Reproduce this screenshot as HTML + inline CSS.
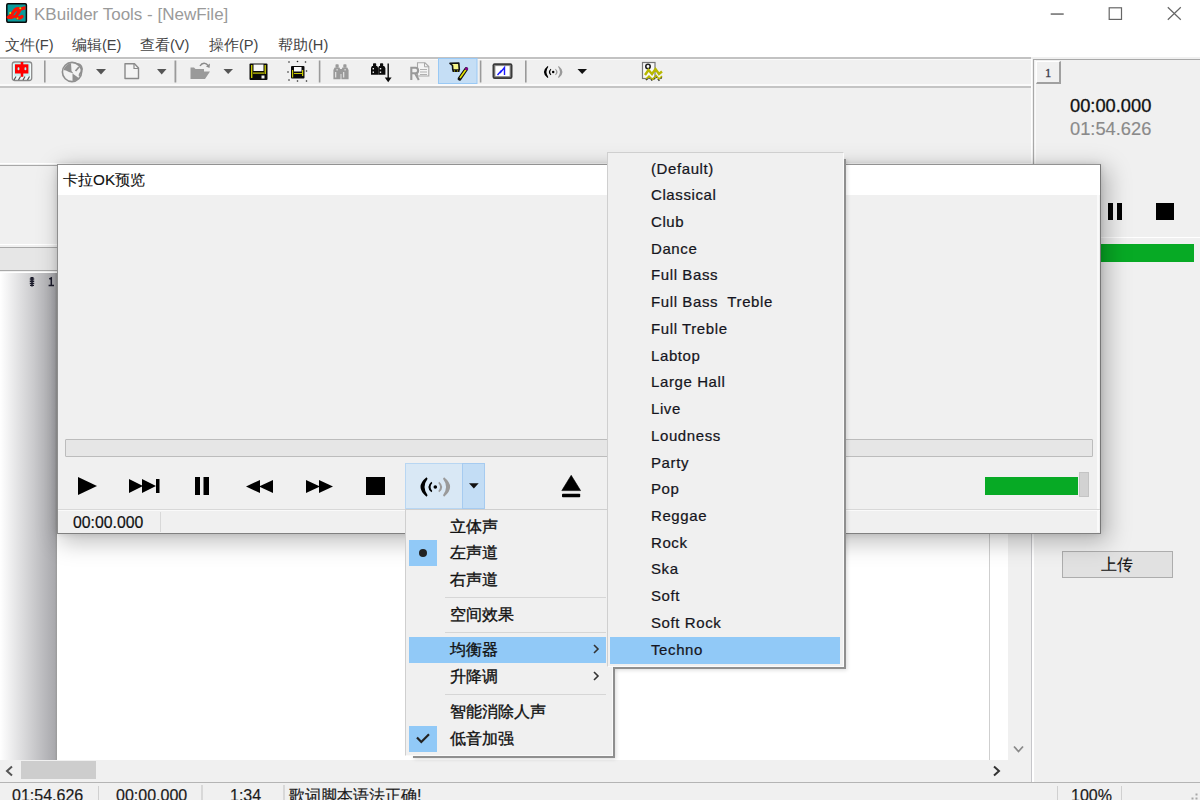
<!DOCTYPE html>
<html><head><meta charset="utf-8">
<style>
*{margin:0;padding:0;box-sizing:border-box}
html,body{width:1200px;height:800px;overflow:hidden;background:#f0f0f0;font-family:"Liberation Sans",sans-serif;color:#1a1a1a}
.a{position:absolute}
.t{position:absolute;white-space:nowrap;line-height:1}
</style></head><body>
<!-- title bar + menu -->
<div class="a" style="left:0;top:0;width:1200px;height:57px;background:#fff"></div>
<div class="a" style="left:7px;top:4px;width:20px;height:19px;background:#0e8a8a;border:2px solid #111;border-radius:2px"></div>
<div class="t" style="left:34px;top:6px;font-size:17px;color:#9a9a9a">KBuilder Tools - [NewFile]</div>
<div class="t" style="left:5px;top:37.5px;font-size:14.6px;color:#444">文件(F)</div>
<div class="t" style="left:72px;top:37.5px;font-size:14.6px;color:#444">编辑(E)</div>
<div class="t" style="left:140px;top:37.5px;font-size:14.6px;color:#444">查看(V)</div>
<div class="t" style="left:209px;top:37.5px;font-size:14.6px;color:#444">操作(P)</div>
<div class="t" style="left:278px;top:37.5px;font-size:14.6px;color:#444">帮助(H)</div>

<!-- toolbar -->
<div class="a" style="left:0;top:56.8px;width:1031px;height:1.8px;background:#c2c2c2"></div>
<div class="a" style="left:0;top:58.6px;width:1031px;height:1.4px;background:#fbfbfb"></div>
<div class="a" style="left:0;top:84px;width:1031px;height:1.5px;background:#fafafa"></div>
<div class="a" style="left:0;top:86.2px;width:1031px;height:1.8px;background:#c4c4c4"></div>


<!-- toolbar icons -->
<svg class="a" style="left:0;top:0" width="700" height="90">
<!-- app icon -->
<rect x="6.8" y="3.8" width="19.6" height="18.4" rx="1.2" fill="#0b9a9a" stroke="#0a0a0a" stroke-width="1.5"/>
<path d="M8.3 17.2 C10 16.5 12 14.5 13.5 12 C15 9.5 17.5 7.8 19.5 9 C20.5 10 19 12 17 14.5 C16 16 16.5 18 19 18 C20.5 18 21.5 17 22 16.5" stroke="#ff1000" stroke-width="3.4" fill="none" stroke-linecap="round"/>
<path d="M16.5 11 C19.5 9.5 22.5 8 25.5 7.8" stroke="#ff1000" stroke-width="3.2" fill="none"/>
<path d="M9 17.5 C12 18.5 14 17 15 15.5" stroke="#ff1000" stroke-width="2.6" fill="none"/>
<circle cx="10.2" cy="13" r="1" fill="#e0e800"/><circle cx="20.3" cy="8.2" r="1" fill="#b0e800"/><circle cx="17.5" cy="18.3" r="0.9" fill="#a0d800"/>
<!-- 中 -->
<rect x="12.3" y="62" width="19.4" height="18.5" rx="2.5" fill="#f2fafa" stroke="#8a8a8a" stroke-width="1.3"/>
<rect x="14" y="63" width="16" height="13" fill="#c8f2f2"/>
<rect x="15" y="64.3" width="13.4" height="9.2" fill="#ff0000"/>
<rect x="20.7" y="62" width="2.6" height="14.8" fill="#ff0000"/>
<rect x="17.6" y="67.2" width="1.8" height="3" rx="0.8" fill="#aef4f4"/>
<rect x="24.5" y="67.2" width="1.8" height="3" rx="0.8" fill="#aef4f4"/>
<path d="M14 80 L16 76.5 M18.5 80 L20.5 76.5 M23 80 L25 76.5 M27.5 80 L29.5 76.5" stroke="#555" stroke-width="1.2"/>
<!-- separators -->
<rect x="44" y="60.5" width="1.6" height="22" fill="#9a9a9a"/>
<rect x="174.5" y="60.5" width="1.8" height="22" fill="#9a9a9a"/>
<rect x="318.8" y="60.5" width="1.6" height="22" fill="#9a9a9a"/>
<rect x="479.8" y="60.5" width="1.6" height="22" fill="#9a9a9a"/>
<rect x="525" y="60.5" width="1.6" height="22" fill="#9a9a9a"/>
<!-- globe -->
<circle cx="72" cy="72" r="9.6" fill="#f2f2f2" stroke="#8f8f8f" stroke-width="1.6"/>
<path d="M63.5 70 C64.5 66.5 67.5 64 71 63.3 L71.5 71 L73.5 73.5 L69 72 L66 70.5 Z" fill="#8f8f8f"/>
<path d="M72.5 73.5 L79.5 78.5 C77.5 80.5 74.5 81.2 72.5 80.8 Z" fill="#8f8f8f"/>
<path d="M75.5 71 L79 67 M77 64 C81 64 83 68 81.5 71.5 C80.5 73 79 74 79.5 76" stroke="#8f8f8f" stroke-width="1.8" fill="none"/>
<polygon points="96,69 106,69 101,74.5" fill="#555"/>
<!-- new doc -->
<path d="M125 63.8 L134.5 63.8 L138.5 68 L138.5 78.5 L125 78.5 Z" fill="#f4f4f4" stroke="#8a8a8a" stroke-width="1.4" stroke-linejoin="round"/>
<path d="M134 63.8 L134 68.5 L138.5 68.5" fill="none" stroke="#8a8a8a" stroke-width="1.2"/>
<polygon points="157,69 166.5,69 161.7,74.5" fill="#555"/>
<!-- folder -->
<path d="M190.5 67.5 L194 67.5 L195.5 69 L204 69 L204 71.5 L210 71.5 L205 79 L190.5 79 Z" fill="#9a9a9a"/>
<path d="M200 66 C202 62.5 206 62.5 208 65.5" stroke="#8a8a8a" stroke-width="1.4" fill="none"/>
<polygon points="206,66.5 210,63.5 209.5,68" fill="#8a8a8a"/>
<polygon points="223.5,69 233,69 228.2,74" fill="#555"/>
<!-- save -->
<rect x="249.5" y="63.5" width="18" height="16.5" rx="1" fill="#0a0a0a"/>
<rect x="253.5" y="64.5" width="10" height="6.5" fill="#fafafa"/>
<rect x="251" y="65" width="1.4" height="13" fill="#c8c800"/>
<rect x="264.5" y="65" width="1.4" height="9" fill="#c8c800"/>
<rect x="253" y="72.5" width="11" height="1.2" fill="#c8c800"/>
<rect x="261.5" y="75.5" width="3" height="3" fill="#f0f0f0"/>
<!-- save all -->
<rect x="291" y="66" width="13.5" height="12.5" rx="1" fill="#0a0a0a"/>
<rect x="294" y="67" width="7.5" height="4.5" fill="#fafafa"/>
<rect x="292" y="70" width="1.2" height="7.5" fill="#c8c800"/>
<rect x="302" y="70" width="1.2" height="6" fill="#c8c800"/>
<rect x="294" y="73" width="8" height="1" fill="#c8c800"/>
<g fill="#222"><circle cx="289" cy="62" r="0.8"/><circle cx="297.5" cy="61.5" r="0.8"/><circle cx="305.5" cy="62" r="0.8"/><circle cx="288" cy="72" r="0.8"/><circle cx="306.5" cy="71" r="0.8"/><circle cx="289" cy="80" r="0.8"/><circle cx="297.5" cy="81" r="0.8"/><circle cx="306.5" cy="81" r="0.8"/></g>
<!-- binoculars gray -->
<g fill="#9a9a9a">
<rect x="335.5" y="64.3" width="3.2" height="3.5" rx="0.8"/>
<rect x="343.3" y="64.3" width="3.2" height="3.5" rx="0.8"/>
<path d="M334.6 67.5 L339.5 67.5 L340.6 70 L340.6 79.3 L333.4 79.3 L333.4 70 Z"/>
<path d="M342.4 67.5 L347.3 67.5 L348.6 70 L348.6 79.3 L341.4 79.3 L341.4 70 Z"/>
<rect x="340" y="69" width="2" height="5"/>
</g>
<g fill="#dedede"><rect x="335" y="72" width="1.3" height="5.5"/><rect x="343" y="72" width="1.3" height="5.5"/><rect x="336.5" y="69" width="1.2" height="1.5"/><rect x="344.5" y="69" width="1.2" height="1.5"/></g>
<!-- binoculars black + arrow -->
<g fill="#0a0a0a">
<rect x="373" y="63.3" width="3.2" height="3.2" rx="0.8"/>
<rect x="380" y="63.3" width="3.2" height="3.2" rx="0.8"/>
<path d="M372 66 L377.2 66 L378.2 68 L378.2 74.7 L371 74.7 L371 68 Z"/>
<path d="M379 66 L384.2 66 L385.4 68 L385.4 74.7 L378.2 74.7 L378.2 68 Z"/>
<rect x="387.5" y="63.5" width="1.4" height="15"/>
<polygon points="384.8,77.5 391.6,77.5 388.2,82.2"/>
</g>
<g fill="#f0f0f0"><rect x="372.6" y="68" width="1.4" height="1.4"/><rect x="372.6" y="71.5" width="1.4" height="1.4"/><rect x="379.8" y="68" width="1.4" height="1.4"/><rect x="379.8" y="71.5" width="1.4" height="1.4"/></g>
<!-- R doc gray -->
<path d="M417.5 62.8 L425 62.8 L428.8 66.5 L428.8 76 L417.5 76 Z" fill="#f4f4f4" stroke="#a8a8a8" stroke-width="1.1"/>
<path d="M424.5 62.8 L424.5 66.8 L428.8 66.8" fill="none" stroke="#a8a8a8" stroke-width="1"/>
<path d="M420 69.5 H427 M420 72 H427 M420 74.5 H427" stroke="#b0b0b0" stroke-width="1.1"/>
<path d="M411.3 80 L411.3 67.8 L415.5 67.8 C419 67.8 419 73.3 415.5 73.3 L411.8 73.3 M415 73.3 L418.8 80" stroke="#999" stroke-width="2.1" fill="none"/>
<!-- highlighted button -->
<rect x="438.5" y="58.5" width="38.5" height="25" fill="#c5def5" stroke="#99c9f5" stroke-width="1"/>
<path d="M450 63.3 L458.8 63 L459.3 69.8 L452.8 70 L452.5 65.5 Z" fill="#f5f58a" stroke="#111" stroke-width="1.6" stroke-linejoin="round"/>
<rect x="452.5" y="70" width="7" height="2" fill="#111"/>
<rect x="454" y="70.5" width="1" height="1" fill="#c8c800"/><rect x="457" y="70.5" width="1" height="1" fill="#c8c800"/>
<path d="M459.5 78.8 L466.3 69" stroke="#111" stroke-width="3.8" stroke-linecap="round"/>
<path d="M460 78 L465.8 69.8" stroke="#e8e800" stroke-width="1.5"/>
<circle cx="466.5" cy="68.8" r="1.5" fill="#8a0090"/>
<!-- monitor -->
<rect x="492.5" y="63.3" width="20" height="15.6" rx="2.2" fill="#3a3a3a"/>
<rect x="494.3" y="65" width="16.4" height="12.2" fill="#8a8a8a"/>
<rect x="495.4" y="66.1" width="14.2" height="10" fill="#fff"/>
<path d="M497.5 75 L501.5 70.5 M500 73 L504.5 67.5 L504.5 75" stroke="#1a1aff" stroke-width="1.4" fill="none"/>
<!-- broadcast -->
<g transform="translate(553.2,72) scale(0.63) translate(-30.3,-24)">
<path d="M21.5 14.3 Q9.5 24 21.5 33.7 L22.6 32.2 Q16.5 24 22.6 15.8 Z" fill="#000"/>
<path d="M26.4 18.7 Q20.3 24 26.4 29.3 L27.3 28 Q23.8 24 27.3 20 Z" fill="#000"/>
<circle cx="30.3" cy="24" r="2" fill="#000"/>
<g transform="translate(60.6,0) scale(-1,1)" fill="#9a9a9a"><path d="M21.5 14.3 Q9.5 24 21.5 33.7 L22.6 32.2 Q16.5 24 22.6 15.8 Z"/>
<path d="M26.4 18.7 Q20.3 24 26.4 29.3 L27.3 28 Q23.8 24 27.3 20 Z"/></g>
</g>
<polygon points="577.5,69 587,69 582.2,74" fill="#111"/>
<!-- last icon -->
<rect x="642.5" y="62.5" width="12.5" height="16" fill="#f8f8f8" stroke="#777" stroke-width="1.2"/>
<circle cx="648" cy="66.5" r="2.2" fill="none" stroke="#222" stroke-width="1.6"/>
<path d="M645 75 L648.5 70 L652 74 L655.5 69 L659 74 L662 71.5" stroke="#b8b800" stroke-width="2.4" fill="none"/>
<path d="M646 80 L649 77 L652.5 80.5 L656 76.5 L659 80 L662 77" stroke="#222" stroke-width="1.6" stroke-dasharray="2 1.5" fill="none"/>
<path d="M646 79 L649 76 L652.5 79.5 L656 75.5 L659 79 L662 76" stroke="#b8b800" stroke-width="1.5" fill="none"/>
</svg>
<svg class="a" style="left:1000px;top:0" width="200" height="30">
<rect x="50.7" y="13.4" width="13" height="1.3" fill="#555"/>
<rect x="109.2" y="7.8" width="12.3" height="11.6" fill="none" stroke="#666" stroke-width="1.2"/>
<path d="M167.8 7.3 L180.8 19.8 M180.8 7.3 L167.8 19.8" stroke="#666" stroke-width="1.2"/>
</svg>
<!-- panels -->
<div class="a" style="left:0;top:163px;width:1031px;height:1px;background:#fff"></div>
<div class="a" style="left:0;top:165px;width:1031px;height:1px;background:#a8a8a8"></div>
<div class="a" style="left:0;top:244px;width:1031px;height:1px;background:#fff"></div>
<div class="a" style="left:0;top:247px;width:1031px;height:1px;background:#a8a8a8"></div>
<div class="a" style="left:0;top:248px;width:1031px;height:22px;background:#e6e6e6"></div>
<div class="a" style="left:0;top:270px;width:1031px;height:1px;background:#a8a8a8"></div>
<div class="a" style="left:0;top:272px;width:1031px;height:1px;background:#fff"></div>

<!-- gutter + editor -->
<div class="a" style="left:0;top:273px;width:57px;height:487px;background:linear-gradient(to right,#fff 0%,#a9a9ad 96%,#999 100%)"></div>
<div class="a" style="left:57px;top:273px;width:951px;height:487px;background:#fff"></div>
<div class="a" style="left:989px;top:273px;width:1px;height:487px;background:#cfcfcf"></div>
<svg class="a" style="left:28px;top:276px" width="30" height="12">
<path d="M4 1.5 L4 10.5" stroke="#1a1a2a" stroke-width="1.6"/>
<path d="M1.8 3 H6.2 M1.8 5.2 H6.2 M1.8 7.4 H6.2" stroke="#1a1a2a" stroke-width="1.5"/>
<path d="M2.5 1.5 L5.5 1.5 M2 9.5 L6 9.5" stroke="#1a1a2a" stroke-width="1.2"/>
<path d="M21.3 3 L23.3 2 L23.3 9.6 M20.6 9.6 H26" stroke="#1a1a2a" stroke-width="1.5" fill="none"/>
</svg>

<!-- scrollbars -->
<div class="a" style="left:0;top:760px;width:1031px;height:22px;background:#f0f0f0"></div>
<div class="a" style="left:21px;top:761px;width:75px;height:18px;background:#cdcdcd"></div>
<svg class="a" style="left:0;top:760px" width="1031" height="22"><path d="M12 6.5 L7 11 L12 15.5" stroke="#555" stroke-width="2" fill="none"/><path d="M994 6.5 L999 11 L994 15.5" stroke="#333" stroke-width="2" fill="none"/></svg>
<svg class="a" style="left:1008px;top:740px" width="22" height="20"><path d="M6 6.5 L10.5 11.5 L15 6.5" stroke="#8a8a8a" stroke-width="1.8" fill="none"/></svg>

<!-- status bar -->
<div class="a" style="left:0;top:781.5px;width:1200px;height:1.6px;background:#b4b4b4"></div>
<div class="t" style="left:12px;top:788px;font-size:16px;-webkit-text-stroke:0.2px #1a1a1a">01:54.626</div>
<div class="a" style="left:98px;top:786px;width:1px;height:14px;background:#d0d0d0"></div>
<div class="t" style="left:116px;top:788px;font-size:16px;-webkit-text-stroke:0.2px #1a1a1a">00:00.000</div>
<div class="a" style="left:201px;top:785px;width:1.5px;height:15px;background:#d8d8d8"></div>
<div class="t" style="left:230px;top:788px;font-size:16px;-webkit-text-stroke:0.2px #1a1a1a">1:34</div>
<div class="a" style="left:283px;top:785px;width:1.5px;height:15px;background:#d8d8d8"></div>
<div class="t" style="left:289px;top:788px;font-size:16px;-webkit-text-stroke:0.2px #1a1a1a">歌词脚本语法正确!</div>
<div class="a" style="left:1057px;top:786px;width:1px;height:14px;background:#d0d0d0"></div>
<div class="t" style="left:1071px;top:788px;font-size:16px;-webkit-text-stroke:0.2px #1a1a1a">100%</div>
<div class="a" style="left:1121px;top:786px;width:1px;height:14px;background:#d0d0d0"></div>

<svg class="a" style="left:1180px;top:785px" width="20" height="15"><g fill="#a8a8a8"><rect x="15.5" y="8.5" width="2" height="2"/><rect x="11.5" y="12.5" width="2" height="2"/><rect x="15.5" y="12.5" width="2" height="2"/></g></svg>
<!-- right panel -->
<div class="a" style="left:1031px;top:59px;width:1px;height:110px;background:#fff"></div>
<div class="a" style="left:1032.5px;top:59px;width:1.5px;height:110px;background:#a8a8a8"></div>
<div class="a" style="left:1035px;top:60px;width:1px;height:110px;background:#fafafa"></div>
<div class="a" style="left:1030.5px;top:500px;width:1.5px;height:282px;background:#c6c6ca"></div>
<div class="a" style="left:1032px;top:500px;width:1.5px;height:282px;background:#fff"></div>
<div class="a" style="left:1033px;top:59px;width:167px;height:1px;background:#a8a8a8"></div>
<div class="a" style="left:1036px;top:61px;width:25px;height:23px;border-left:1px solid #fff;border-top:1px solid #fff;border-right:2px solid #a0a0a0;border-bottom:2px solid #a0a0a0"></div>
<div class="t" style="left:1045px;top:66.5px;font-size:12.5px;font-family:'Liberation Serif',serif;color:#3a3a4a;-webkit-text-stroke:0.3px #3a3a4a">1</div>
<div class="t" style="left:1070px;top:97px;font-size:18.3px;color:#111;-webkit-text-stroke:0.3px #111">00:00.000</div>
<div class="t" style="left:1070px;top:119.5px;font-size:18.3px;color:#8a8a8a;-webkit-text-stroke:0.15px #8a8a8a">01:54.626</div>
<div class="a" style="left:1108px;top:203px;width:5px;height:17px;background:#000"></div>
<div class="a" style="left:1117px;top:203px;width:5px;height:17px;background:#000"></div>
<div class="a" style="left:1156px;top:203px;width:18px;height:17px;background:#000"></div>
<div class="a" style="left:1033px;top:237px;width:167px;height:1px;background:#fff"></div>
<div class="a" style="left:1040px;top:244px;width:154px;height:18px;background:#07aa25"></div>
<div class="a" style="left:1062px;top:551px;width:111px;height:27px;background:#e1e1e1;border:1px solid #adadad"></div>
<div class="t" style="left:1101px;top:556.5px;font-size:15.5px;color:#111;-webkit-text-stroke:0.12px #111">上传</div>


<!-- karaoke window -->
<div class="a" style="left:56.5px;top:164px;width:1044.5px;height:370px;box-shadow:5px 6px 22px 2px rgba(0,0,0,0.26),0 0 6px rgba(0,0,0,0.12);background:#f0f0f0;border-left:1.5px solid #8e8e8e;border-top:1.5px solid #929292;border-right:1.8px solid #777;border-bottom:1.8px solid #808080"></div>
<div class="a" style="left:1097px;top:195px;width:2px;height:337px;background:#fafafa"></div>
<div class="a" style="left:58px;top:165px;width:1042px;height:30px;background:#fff"></div>
<div class="t" style="left:63px;top:171.5px;font-size:15.3px;color:#111;-webkit-text-stroke:0.12px #111">卡拉OK预览</div>
<div class="a" style="left:65px;top:439px;width:1028px;height:18px;background:#e6e6e6;border:1px solid #bcbcbc;border-radius:1px"></div>
<!-- controls -->
<svg class="a" style="left:0;top:0" width="1200" height="800">
<polygon points="78,477 97,486 78,495" fill="#000"/>
<polygon points="129,479 143,486 129,493" fill="#000"/>
<polygon points="142,479 156,486 142,493" fill="#000"/>
<rect x="156" y="479" width="3.5" height="14" fill="#000"/>
<rect x="195" y="477" width="5" height="18" fill="#000"/>
<rect x="203.5" y="477" width="5.5" height="18" fill="#000"/>
<polygon points="246,486.5 260,480 260,493" fill="#000"/>
<polygon points="259,486.5 273,480 273,493" fill="#000"/>
<polygon points="306,480 320,486.5 306,493" fill="#000"/>
<polygon points="319,480 333,486.5 319,493" fill="#000"/>
<rect x="366" y="477" width="19" height="18" fill="#000"/>
<polygon points="571.2,475.3 580.6,490.6 561.8,490.6" fill="#000" stroke="#000" stroke-width="0.6" stroke-linejoin="round"/>
<rect x="562" y="493.8" width="18.2" height="3.4" rx="0.8" fill="#000"/>
</svg>
<div class="a" style="left:405px;top:463px;width:80px;height:46px;background:#d9e8f5;border:1px solid #b8d6f2"></div>
<div class="a" style="left:462px;top:463px;width:23px;height:46px;background:#c3ddf5;border:1px solid #a6cbf0"></div>
<svg class="a" style="left:405px;top:463px" width="80" height="46">
<g id="wl"><path d="M21.5 14.3 Q9.5 24 21.5 33.7 L22.6 32.2 Q16.5 24 22.6 15.8 Z" fill="#000"/>
<path d="M26.4 18.7 Q20.3 24 26.4 29.3 L27.3 28 Q23.8 24 27.3 20 Z" fill="#000"/></g>
<circle cx="30.3" cy="24" r="1.8" fill="#000"/>
<g transform="translate(60.6,0) scale(-1,1)" fill="#9a9a9a"><path d="M21.5 14.3 Q9.5 24 21.5 33.7 L22.6 32.2 Q16.5 24 22.6 15.8 Z"/>
<path d="M26.4 18.7 Q20.3 24 26.4 29.3 L27.3 28 Q23.8 24 27.3 20 Z"/></g>
<polygon points="64,20.3 73.7,20.3 68.85,25.6" fill="#111"/>
</svg>
<div class="a" style="left:58px;top:509px;width:1042px;height:1px;background:#d8d8d8"></div>
<div class="a" style="left:58px;top:510px;width:1042px;height:1px;background:#fafafa"></div>
<div class="t" style="left:73px;top:514.5px;font-size:15.8px;color:#111;-webkit-text-stroke:0.2px #111">00:00.000</div>
<div class="a" style="left:160px;top:512px;width:1px;height:20px;background:#d8d8d8"></div>
<div class="a" style="left:985px;top:477px;width:93px;height:18px;background:#07aa25"></div>
<div class="a" style="left:1079px;top:472px;width:10px;height:25px;background:#d2d2d2;border:1px solid #c4c4c4"></div>

<!-- sound menu -->
<div class="a" style="left:413px;top:516px;width:202.2px;height:242.2px;background:#8f8f8f;box-shadow:1px 1px 4px rgba(0,0,0,0.15)"></div>
<div class="a" style="left:405px;top:509px;width:208px;height:247px;background:#f0f0f0;border-left:1px solid #cfcfcf;border-top:1px solid #cfcfcf;border-right:1.6px solid #fafafa;border-bottom:1.6px solid #fafafa"></div>
<div class="a" style="left:409px;top:540px;width:28px;height:26px;background:#91c9f7"></div>
<div class="a" style="left:419px;top:549px;width:8px;height:8px;border-radius:50%;background:#222"></div>
<div class="a" style="left:409.3px;top:726px;width:27.7px;height:26px;background:#91c9f7"></div>
<svg class="a" style="left:409px;top:726px" width="28" height="26"><path d="M8 11.5 L12.3 16 L20 8.2" stroke="#222" stroke-width="2.2" fill="none"/></svg>
<div class="a" style="left:445px;top:597px;width:161px;height:1px;background:#d6d6d6"></div>
<div class="a" style="left:445px;top:632px;width:161px;height:1px;background:#d6d6d6"></div>
<div class="a" style="left:445px;top:694px;width:161px;height:1px;background:#d6d6d6"></div>
<div class="a" style="left:409px;top:637px;width:197px;height:26px;background:#91c9f7"></div>
<div class="t" style="left:450px;top:518.5px;font-size:15.5px;color:#111;-webkit-text-stroke:0.35px #111">立体声</div>
<div class="t" style="left:450px;top:545.2px;font-size:15.5px;color:#111;-webkit-text-stroke:0.35px #111">左声道</div>
<div class="t" style="left:450px;top:572.0px;font-size:15.5px;color:#111;-webkit-text-stroke:0.35px #111">右声道</div>
<div class="t" style="left:450px;top:607.0px;font-size:15.5px;color:#111;-webkit-text-stroke:0.35px #111">空间效果</div>
<div class="t" style="left:450px;top:642.0px;font-size:15.5px;color:#111;-webkit-text-stroke:0.35px #111">均衡器</div>
<div class="t" style="left:450px;top:669.0px;font-size:15.5px;color:#111;-webkit-text-stroke:0.35px #111">升降调</div>
<div class="t" style="left:450px;top:704.0px;font-size:15.5px;color:#111;-webkit-text-stroke:0.35px #111">智能消除人声</div>
<div class="t" style="left:450px;top:731.0px;font-size:15.5px;color:#111;-webkit-text-stroke:0.35px #111">低音加强</div>
<svg class="a" style="left:590px;top:640px" width="12" height="50"><path d="M4 5 L8 9 L4 13" stroke="#333" stroke-width="1.6" fill="none"/><path d="M4 32 L8 36 L4 40" stroke="#333" stroke-width="1.6" fill="none"/></svg>

<!-- EQ submenu -->
<div class="a" style="left:614px;top:159px;width:232.2px;height:510.2px;background:#8f8f8f;box-shadow:1px 1px 4px rgba(0,0,0,0.15)"></div>
<div class="a" style="left:607px;top:152px;width:237px;height:515px;background:#f0f0f0;border-left:1px solid #cfcfcf;border-top:1px solid #cfcfcf;border-right:1.6px solid #fafafa;border-bottom:1.6px solid #fafafa"></div>
<div class="a" style="left:610px;top:637px;width:230px;height:26.5px;background:#91c9f7"></div>
<div class="t" style="left:651px;top:160.60px;font-size:15px;letter-spacing:0.6px;color:#151520;-webkit-text-stroke:0.22px #151520">(Default)</div>
<div class="t" style="left:651px;top:187.32px;font-size:15px;letter-spacing:0.6px;color:#151520;-webkit-text-stroke:0.22px #151520">Classical</div>
<div class="t" style="left:651px;top:214.04px;font-size:15px;letter-spacing:0.6px;color:#151520;-webkit-text-stroke:0.22px #151520">Club</div>
<div class="t" style="left:651px;top:240.76px;font-size:15px;letter-spacing:0.6px;color:#151520;-webkit-text-stroke:0.22px #151520">Dance</div>
<div class="t" style="left:651px;top:267.48px;font-size:15px;letter-spacing:0.6px;color:#151520;-webkit-text-stroke:0.22px #151520">Full Bass</div>
<div class="t" style="left:651px;top:294.20px;font-size:15px;letter-spacing:0.6px;color:#151520;-webkit-text-stroke:0.22px #151520">Full Bass&nbsp; Treble</div>
<div class="t" style="left:651px;top:320.92px;font-size:15px;letter-spacing:0.6px;color:#151520;-webkit-text-stroke:0.22px #151520">Full Treble</div>
<div class="t" style="left:651px;top:347.64px;font-size:15px;letter-spacing:0.6px;color:#151520;-webkit-text-stroke:0.22px #151520">Labtop</div>
<div class="t" style="left:651px;top:374.36px;font-size:15px;letter-spacing:0.6px;color:#151520;-webkit-text-stroke:0.22px #151520">Large Hall</div>
<div class="t" style="left:651px;top:401.08px;font-size:15px;letter-spacing:0.6px;color:#151520;-webkit-text-stroke:0.22px #151520">Live</div>
<div class="t" style="left:651px;top:427.80px;font-size:15px;letter-spacing:0.6px;color:#151520;-webkit-text-stroke:0.22px #151520">Loudness</div>
<div class="t" style="left:651px;top:454.52px;font-size:15px;letter-spacing:0.6px;color:#151520;-webkit-text-stroke:0.22px #151520">Party</div>
<div class="t" style="left:651px;top:481.24px;font-size:15px;letter-spacing:0.6px;color:#151520;-webkit-text-stroke:0.22px #151520">Pop</div>
<div class="t" style="left:651px;top:507.96px;font-size:15px;letter-spacing:0.6px;color:#151520;-webkit-text-stroke:0.22px #151520">Reggae</div>
<div class="t" style="left:651px;top:534.68px;font-size:15px;letter-spacing:0.6px;color:#151520;-webkit-text-stroke:0.22px #151520">Rock</div>
<div class="t" style="left:651px;top:561.40px;font-size:15px;letter-spacing:0.6px;color:#151520;-webkit-text-stroke:0.22px #151520">Ska</div>
<div class="t" style="left:651px;top:588.12px;font-size:15px;letter-spacing:0.6px;color:#151520;-webkit-text-stroke:0.22px #151520">Soft</div>
<div class="t" style="left:651px;top:614.84px;font-size:15px;letter-spacing:0.6px;color:#151520;-webkit-text-stroke:0.22px #151520">Soft Rock</div>
<div class="t" style="left:651px;top:641.56px;font-size:15px;letter-spacing:0.6px;color:#151520;-webkit-text-stroke:0.22px #151520">Techno</div>
</body></html>
